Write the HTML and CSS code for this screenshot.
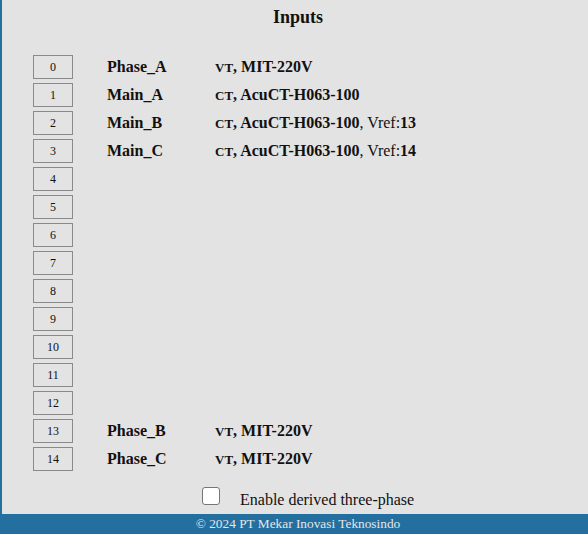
FILE: index.html
```html
<!DOCTYPE html>
<html>
<head>
<meta charset="utf-8">
<link rel="stylesheet" href="styles.css">
</head>
<body>
<main class="main">
  <h1 class="title">Inputs</h1>
  <div class="inputs">
    <div class="num">0</div><div class="name">Phase_A</div><div class="type"><span class="sc">vt</span><b>, MIT-220V</b></div>
    <div class="num">1</div><div class="name">Main_A</div><div class="type"><span class="sc">ct</span><b>, AcuCT-H063-100</b></div>
    <div class="num">2</div><div class="name">Main_B</div><div class="type"><span class="sc">ct</span><b>, AcuCT-H063-100</b>, Vref:<b>13</b></div>
    <div class="num">3</div><div class="name">Main_C</div><div class="type"><span class="sc">ct</span><b>, AcuCT-H063-100</b>, Vref:<b>14</b></div>
    <div class="num">4</div><div class="name"></div><div class="type"></div>
    <div class="num">5</div><div class="name"></div><div class="type"></div>
    <div class="num">6</div><div class="name"></div><div class="type"></div>
    <div class="num">7</div><div class="name"></div><div class="type"></div>
    <div class="num">8</div><div class="name"></div><div class="type"></div>
    <div class="num">9</div><div class="name"></div><div class="type"></div>
    <div class="num">10</div><div class="name"></div><div class="type"></div>
    <div class="num">11</div><div class="name"></div><div class="type"></div>
    <div class="num">12</div><div class="name"></div><div class="type"></div>
    <div class="num">13</div><div class="name">Phase_B</div><div class="type"><span class="sc">vt</span><b>, MIT-220V</b></div>
    <div class="num">14</div><div class="name">Phase_C</div><div class="type"><span class="sc">vt</span><b>, MIT-220V</b></div>
  </div>
  <label class="derived"><input type="checkbox" class="check"><span class="derived-text">Enable derived three-phase</span></label>
</main>
<footer class="footer">© 2024 PT Mekar Inovasi Teknosindo</footer>
</body>
</html>
```
FILE: styles.css
```css
html, body {
  height: 100%;
}
body {
  margin: 0;
  display: flex;
  flex-direction: column;
  background: #e3e3e3;
  font-family: "Liberation Serif", "Times New Roman", serif;
  color: #111;
}
.main {
  flex: 1;
  border-left: 2px solid #236fa0;
}
.title {
  margin: 0;
  padding: 6px 0 0 6px;
  font-size: 18px;
  line-height: 22px;
  font-weight: bold;
  text-align: center;
}
.inputs {
  margin-top: 25px;
  padding-left: 31px;
  display: grid;
  grid-template-columns: 74px 108px 1fr;
  grid-auto-rows: 28px;
  align-items: center;
}
.num {
  box-sizing: border-box;
  width: 40px;
  height: 24px;
  border: 1px solid #8a8a8a;
  font-size: 12px;
  line-height: 22px;
  text-align: center;
}
.name {
  font-size: 16px;
  font-weight: bold;
}
.type {
  font-size: 16px;
}
.sc {
  text-transform: uppercase;
  font-size: 13px;
  font-weight: bold;
}
.derived {
  margin-top: 14px;
  padding-left: 200px;
  display: flex;
  align-items: baseline;
  gap: 20px;
  font-size: 16px;
}
.check {
  appearance: none;
  -webkit-appearance: none;
  margin: 0;
  width: 18px;
  height: 18px;
  box-sizing: border-box;
  border: 1px solid #767676;
  border-radius: 3px;
  background: #fff;
}
.footer {
  height: 20px;
  line-height: 20px;
  background: #236fa0;
  color: #e6e6e6;
  font-size: 13.33px;
  text-align: center;
  padding-left: 8px;
}
```
